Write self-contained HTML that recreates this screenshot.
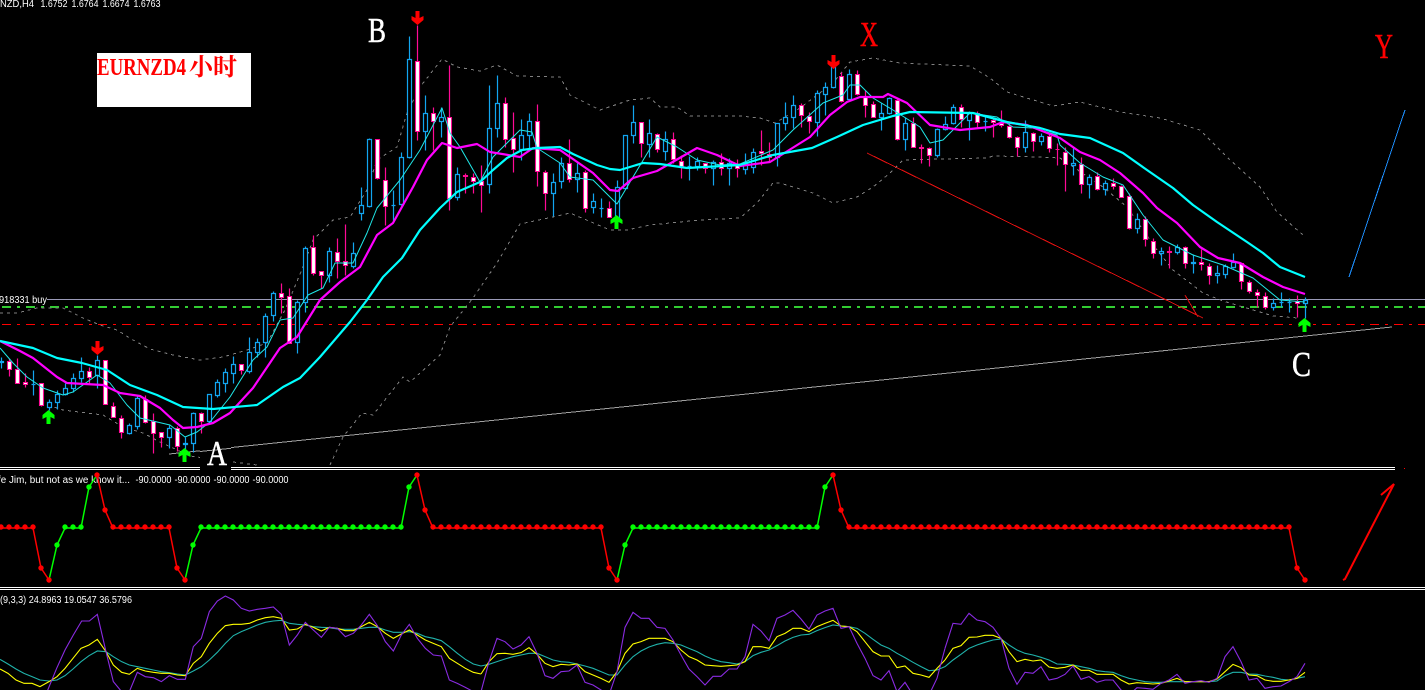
<!DOCTYPE html>
<html lang="zh">
<head>
<meta charset="utf-8">
<title>EURNZD H4</title>
<style>
html,body{margin:0;padding:0;background:#000;width:1425px;height:690px;overflow:hidden}
svg{display:block}
.t{font-family:"Liberation Sans",sans-serif;font-size:10px;fill:#fff}
.l{font-family:"Liberation Serif",serif;font-size:35px;stroke-width:.5}
</style>
</head>
<body>
<svg width="1425" height="690" viewBox="0 0 1425 690" xmlns="http://www.w3.org/2000/svg">
<rect width="1425" height="690" fill="#000"/>

<!-- Horizontal levels -->
<g shape-rendering="crispEdges" fill="none">
<path d="M47 299.5H1425" stroke="#9a9ab8" stroke-width="1"/>
<path d="M2 307H1425" stroke="#32cd32" stroke-width="2" stroke-dasharray="9 6 3 6"/>
<path d="M2 324.5H1425" stroke="#f00" stroke-width="1" stroke-dasharray="9 6 3 6"/>
</g>

<!-- Bollinger bands -->
<g fill="none" stroke="#808080" stroke-width="1" stroke-dasharray="3 4" shape-rendering="crispEdges">
<polyline points="0,313 17,313 37,308 63,308 83,318 100,325 117,330 133,340 150,349 173,355 200,360 223,357 247,350 267,343 285,310 303,267 313,240 333,220 350,217 367,190 377,160 397,147 407,113 420,87 442,59 457,67 480,71 497,65 517,76 560,77 570,95 600,110 630,100 650,98 660,107 677,107 690,116 740,116 760,118 775,123 800,108 833,83 850,62 873,58 900,63 970,66 990,78 1007,92 1040,102 1053,106 1080,102 1120,112 1160,118 1200,130 1227,157 1260,187 1277,212 1303,235"/>
<polyline points="48,405 63,410 87,413 103,415 123,427 143,433 160,442 173,448 190,456 233,462 257,465"/>
<polyline points="330,465 343,437 362,413 373,415 403,377 410,382 440,355 450,327 473,298 497,263 520,224 553,217 570,213 610,230 627,230 650,225 700,220 740,218 757,203 773,183 780,183 813,193 833,203 857,197 873,187 890,173 903,160 987,158 993,156 1040,157 1060,158 1103,187 1127,207 1157,250 1173,270 1203,293 1223,301 1260,312 1273,316 1298,318"/>
</g>

<!-- Trend lines -->
<g fill="none" stroke-width="1" shape-rendering="crispEdges">
<path d="M169 454L1392 327" stroke="#a0a0a0"/>
<path d="M867 153L1203 318M1185 295L1198 317" stroke="#e01010"/>
<path d="M1349 277L1405 110" stroke="#1e90ff"/>
</g>

<!-- Candles -->
<g transform="translate(.5 .5)">
<path fill="none" stroke="#12a5f0" stroke-width="1.2" d="M1 357V368M33 370V395M49 399V410M57 390V409M65 383V395M73 373V392M81 357V382M97 355V388M129 423V434M137 395V429M169 425V448M185 437V450M193 412V452M209 394V423M217 379V397M225 368V392M233 356V383M249 337V373M257 338V357M265 313V357M273 291V321M297 300V353M305 246V312M329 247V282M353 242V268M361 187V220M369 138V207M393 190V222M401 152V205M409 36V158M425 95V150M441 107V137M457 167V200M489 85V193M497 75V137M521 119V160M529 113V149M553 173V216M561 157V188M577 163V192M593 193V213M601 198V217M617 180V218M625 135V188M633 105V143M649 119V157M665 131V160M689 156V180M697 157V170M713 160V185M729 158V185M745 153V174M753 148V173M777 123V166M785 102V130M793 95V128M817 90V136M825 82V115M833 65V88M849 69V100M881 103V130M889 97V114M905 117V150M937 128V157M945 116V130M953 104V124M969 111V140M985 115V131M1025 120V152M1041 133V145M1073 148V175M1089 174V198M1105 180V195M1137 213V233M1161 247V265M1177 244V254M1193 254V273M1217 265V283M1225 264V278M1233 253V268M1273 298V310M1281 292V307M1289 298V312M1305 297V318"/>
<path fill="none" stroke="#ff0a96" stroke-width="1.2" d="M9 358V376M17 358V383M25 373V387M41 383V406M89 367V383M105 360V404M113 402V417M121 415V438M145 395V423M153 413V453M161 432V447M177 426V451M201 412V433M241 364V374M281 283V313M289 288V343M313 235V275M321 271V288M337 238V278M345 224V275M377 139V179M385 167V225M417 25V140M433 107V150M449 65V210M465 173V193M473 173V193M481 165V212M505 97V147M513 112V172M537 104V186M545 170V210M569 139V182M585 170V212M609 201V217M641 122V157M657 133V152M673 132V163M681 155V178M705 163V173M721 153V175M737 159V177M761 130V165M769 142V162M801 103V127M809 112V133M841 72V102M857 70V95M865 90V117M873 101V117M897 97V140M913 117V147M921 144V163M929 147V166M961 104V127M977 111V127M993 118V137M1001 110V127M1009 122V138M1017 136V156M1033 132V151M1049 133V152M1057 143V165M1065 147V191M1081 157V193M1097 172V190M1113 178V189M1121 185V197M1129 193V229M1145 216V246M1153 238V258M1169 246V268M1185 246V268M1201 249V270M1209 263V284M1241 262V289M1249 280V293M1257 289V307M1265 292V309M1297 295V317"/>
<path fill="#000" stroke="#12a5f0" stroke-width="1.2" d="M-1 361h4v1h-4zM31 384h4v0h-4zM47 402h4v5h-4zM55 394h4v8h-4zM63 388h4v6h-4zM71 378h4v10h-4zM79 371h4v7h-4zM95 360h4v15h-4zM127 425h4v8h-4zM135 398h4v28h-4zM167 428h4v9h-4zM183 443h4v1h-4zM191 413h4v30h-4zM207 394h4v27h-4zM215 382h4v13h-4zM223 372h4v11h-4zM231 364h4v9h-4zM247 352h4v19h-4zM255 342h4v10h-4zM263 316h4v26h-4zM271 293h4v22h-4zM295 302h4v40h-4zM303 248h4v54h-4zM327 251h4v24h-4zM351 253h4v13h-4zM359 205h4v8h-4zM367 139h4v67h-4zM391 205h4v0h-4zM399 157h4v47h-4zM407 59h4v98h-4zM423 113h4v18h-4zM439 117h4v4h-4zM455 174h4v23h-4zM487 128h4v56h-4zM495 103h4v25h-4zM519 135h4v14h-4zM527 121h4v14h-4zM551 182h4v11h-4zM559 163h4v18h-4zM575 173h4v6h-4zM591 201h4v6h-4zM599 208h4v0h-4zM615 187h4v30h-4zM623 135h4v53h-4zM631 122h4v13h-4zM647 133h4v11h-4zM663 139h4v12h-4zM687 166h4v0h-4zM695 161h4v5h-4zM711 162h4v6h-4zM727 163h4v5h-4zM743 163h4v6h-4zM751 152h4v15h-4zM775 123h4v34h-4zM783 117h4v6h-4zM791 105h4v12h-4zM815 93h4v29h-4zM823 87h4v7h-4zM831 67h4v20h-4zM847 74h4v25h-4zM879 113h4v4h-4zM887 98h4v15h-4zM903 123h4v16h-4zM935 129h4v26h-4zM943 124h4v5h-4zM951 107h4v16h-4zM967 113h4v7h-4zM983 121h4v0h-4zM1023 132h4v15h-4zM1039 136h4v5h-4zM1071 163h4v2h-4zM1087 177h4v7h-4zM1103 183h4v6h-4zM1135 219h4v9h-4zM1159 251h4v2h-4zM1175 247h4v5h-4zM1191 262h4v1h-4zM1215 273h4v2h-4zM1223 266h4v8h-4zM1231 262h4v5h-4zM1271 303h4v4h-4zM1279 302h4v0h-4zM1287 302h4v0h-4zM1303 300h4v3h-4z"/>
<path fill="#fff" stroke="#ff0a96" stroke-width="1.1" d="M7 361h4v8h-4zM15 369h4v14h-4zM23 382h4v2h-4zM39 383h4v22h-4zM87 371h4v6h-4zM103 360h4v44h-4zM111 406h4v11h-4zM119 418h4v14h-4zM143 399h4v23h-4zM151 421h4v12h-4zM159 432h4v5h-4zM175 428h4v18h-4zM199 413h4v8h-4zM239 364h4v6h-4zM279 293h4v4h-4zM287 296h4v47h-4zM311 247h4v26h-4zM319 271h4v4h-4zM335 252h4v9h-4zM343 261h4v4h-4zM375 139h4v39h-4zM383 180h4v26h-4zM415 61h4v70h-4zM431 113h4v8h-4zM447 117h4v81h-4zM463 175h4v1h-4zM471 177h4v4h-4zM479 181h4v4h-4zM503 103h4v36h-4zM511 138h4v11h-4zM535 121h4v50h-4zM543 172h4v21h-4zM567 163h4v16h-4zM583 172h4v36h-4zM607 208h4v9h-4zM639 122h4v21h-4zM655 134h4v15h-4zM671 139h4v20h-4zM679 161h4v5h-4zM703 163h4v5h-4zM719 162h4v6h-4zM735 164h4v4h-4zM759 151h4v2h-4zM767 154h4v3h-4zM799 105h4v10h-4zM807 116h4v5h-4zM839 76h4v25h-4zM855 74h4v20h-4zM863 97h4v8h-4zM871 104h4v13h-4zM895 100h4v39h-4zM911 123h4v24h-4zM919 147h4v1h-4zM927 148h4v7h-4zM959 107h4v12h-4zM975 113h4v9h-4zM991 120h4v2h-4zM999 123h4v2h-4zM1007 126h4v11h-4zM1015 137h4v10h-4zM1031 133h4v8h-4zM1047 136h4v12h-4zM1055 149h4v0h-4zM1063 152h4v12h-4zM1079 164h4v20h-4zM1095 176h4v13h-4zM1111 183h4v3h-4zM1119 186h4v11h-4zM1127 196h4v32h-4zM1143 219h4v20h-4zM1151 241h4v12h-4zM1167 251h4v1h-4zM1183 247h4v16h-4zM1199 262h4v2h-4zM1207 266h4v9h-4zM1239 263h4v18h-4zM1247 282h4v9h-4zM1255 292h4v3h-4zM1263 296h4v11h-4zM1295 301h4v2h-4z"/>
</g>

<!-- Moving averages -->
<g fill="none" stroke-linejoin="round">
<polyline stroke="#20e8e8" stroke-width="1" points="0,348 13,363 27,377 43,388 63,395 73,392 97,375 110,383 127,405 140,418 170,425 185,437 197,432 210,422 230,397 253,360 267,347 280,320 293,318 308,295 323,288 335,263 343,263 353,263 367,233 377,208 400,180 420,150 442,108 450,133 460,147 480,182 493,157 520,130 532,132 537,148 560,163 570,177 593,180 617,204 633,177 657,137 677,147 697,160 720,165 740,164 773,150 793,130 823,103 843,95 850,85 860,85 873,98 893,110 920,127 930,143 943,140 970,113 997,117 1013,127 1033,128 1057,135 1060,145 1080,163 1103,177 1123,185 1143,215 1163,240 1193,255 1223,265 1253,278 1280,300 1305,302"/>
<polyline stroke="#ff00ff" stroke-width="2.2" points="0,341 20,351 33,358 57,377 67,383 103,385 120,393 140,396 160,408 173,420 183,428 197,427 213,423 230,413 253,388 280,348 297,337 320,300 340,282 360,267 377,235 393,223 413,187 427,160 442,143 457,148 477,144 490,152 520,157 533,148 560,150 593,173 610,190 618,191 633,178 657,171 697,148 717,155 740,166 770,162 810,137 830,115 847,102 860,97 883,97 888,94 907,103 930,125 960,130 990,127 1003,122 1027,125 1060,138 1080,152 1100,160 1120,173 1143,193 1157,208 1177,223 1200,247 1218,258 1240,263 1263,277 1283,287 1305,294"/>
<polyline stroke="#00ffff" stroke-width="2.2" points="0,341 33,348 57,358 82,363 107,370 130,385 157,395 183,407 213,409 257,405 283,387 300,378 320,357 350,322 367,300 383,277 402,258 420,230 440,208 457,192 480,182 493,170 507,158 522,150 537,148 560,147 573,154 597,165 610,169 620,170 643,163 660,164 687,168 740,165 773,155 812,148 837,137 863,125 893,116 910,112 973,113 1007,122 1040,128 1060,134 1090,138 1123,153 1147,170 1173,188 1193,205 1217,222 1247,242 1263,253 1280,267 1305,277"/>
</g>

<!-- Arrows -->
<g fill="#f00">
<polygon transform="translate(97.5 341)" points="-2,0 2,0 2,7 6,5 6,9 0,14 -6,9 -6,5 -2,7"/>
<polygon transform="translate(417.5 11)" points="-2,0 2,0 2,7 6,5 6,9 0,14 -6,9 -6,5 -2,7"/>
<polygon transform="translate(833.5 55)" points="-2,0 2,0 2,7 6,5 6,9 0,14 -6,9 -6,5 -2,7"/>
</g>
<g fill="#00ff00">
<polygon transform="translate(48.5 410)" points="0,0 6,5 6,9 2,7 2,14 -2,14 -2,7 -6,9 -6,5"/>
<polygon transform="translate(184.5 448)" points="0,0 6,5 6,9 2,7 2,14 -2,14 -2,7 -6,9 -6,5"/>
<polygon transform="translate(616.5 215)" points="0,0 6,5 6,9 2,7 2,14 -2,14 -2,7 -6,9 -6,5"/>
<polygon transform="translate(1304.5 318)" points="0,0 6,5 6,9 2,7 2,14 -2,14 -2,7 -6,9 -6,5"/>
</g>

<!-- Text label box -->
<rect x="97" y="53" width="154" height="54" fill="#fff"/>
<text x="97" y="75" textLength="89" lengthAdjust="spacingAndGlyphs" style="font-family:'Liberation Serif',serif;font-size:24px;font-weight:bold;fill:#f00">EURNZD4</text>
<text x="189" y="75" style="font-family:'Liberation Serif','Noto Serif CJK SC',serif;font-size:24px;font-weight:bold;fill:#f00">小时</text>

<!-- Separators -->
<g shape-rendering="crispEdges" fill="#fff">
<rect x="0" y="467" width="1395" height="1"/>
<rect x="0" y="469" width="1395" height="1"/>
<rect x="0" y="587" width="1425" height="1"/>
<rect x="0" y="589" width="1425" height="1"/>
</g>
<rect x="200" y="440" width="31" height="31" fill="#000"/>
<path d="M200 451.5L231 448.3" stroke="#a0a0a0" fill="none" stroke-width="1" shape-rendering="crispEdges"/>

<!-- Chart letters -->
<text class="l" x="368" y="42" textLength="18" lengthAdjust="spacingAndGlyphs" fill="#fff" stroke="#fff">B</text>
<text class="l" x="860" y="46" textLength="18" lengthAdjust="spacingAndGlyphs" fill="#f00" stroke="#f00">X</text>
<text class="l" x="1375" y="58" textLength="18" lengthAdjust="spacingAndGlyphs" fill="#f00" stroke="#f00">Y</text>
<text class="l" x="1292" y="376" textLength="19" lengthAdjust="spacingAndGlyphs" fill="#fff" stroke="#fff">C</text>
<text class="l" x="207" y="465" textLength="20" lengthAdjust="spacingAndGlyphs" fill="#fff" stroke="#fff">A</text>

<!-- Header texts -->
<text class="t" x="0" y="7" textLength="34" lengthAdjust="spacingAndGlyphs">NZD,H4</text>
<text class="t" x="40.5" y="7" textLength="27" lengthAdjust="spacingAndGlyphs">1.6752</text>
<text class="t" x="71.5" y="7" textLength="27" lengthAdjust="spacingAndGlyphs">1.6764</text>
<text class="t" x="102.5" y="7" textLength="27" lengthAdjust="spacingAndGlyphs">1.6674</text>
<text class="t" x="133.5" y="7" textLength="27" lengthAdjust="spacingAndGlyphs">1.6763</text>
<text class="t" x="-1" y="303" textLength="48" lengthAdjust="spacingAndGlyphs">918331 buy</text>
<text class="t" x="-2" y="483" textLength="132" lengthAdjust="spacingAndGlyphs">fe Jim, but not as we know it...</text>
<text class="t" x="135.5" y="483" textLength="36" lengthAdjust="spacingAndGlyphs">-90.0000</text>
<text class="t" x="174.5" y="483" textLength="36" lengthAdjust="spacingAndGlyphs">-90.0000</text>
<text class="t" x="213.5" y="483" textLength="36" lengthAdjust="spacingAndGlyphs">-90.0000</text>
<text class="t" x="252.5" y="483" textLength="36" lengthAdjust="spacingAndGlyphs">-90.0000</text>
<text class="t" x="0" y="603" textLength="132" lengthAdjust="spacingAndGlyphs">(9,3,3) 24.8963 19.0547 36.5796</text>

<!-- Middle indicator -->
<g fill="none" stroke-width="1.5">
<g stroke="#f00">
<polyline points="0,528 33,528 41,568 49,580"/>
<polyline points="97,475 105,510 113,528 169,528 177,568 185,580"/>
<polyline points="417,475 425,510 433,528 601,528 609,568 617,580"/>
<polyline points="833,475 841,510 849,528 1289,528 1297,568 1305,580"/>
</g>
<g stroke="#00ff00">
<polyline points="49,580 57,545 65,528 81,528 89,487 97,475"/>
<polyline points="185,580 193,545 201,528 401,528 409,487 417,475"/>
<polyline points="617,580 625,545 633,528 817,528 825,487 833,475"/>
</g>
</g>
<g fill="none" stroke-linecap="round" stroke-width="5.4" stroke-dasharray="0 8">
<path stroke="#f00" d="M1 527H34M113 527H170M433 527H602M849 527H1290"/>
<path stroke="#00ff00" d="M65 527H82M201 527H402M633 527H818"/>
</g>
<g fill="#f00">
<circle cx="41" cy="568" r="2.7"/><circle cx="49" cy="580" r="2.7"/><circle cx="97" cy="475" r="2.7"/><circle cx="105" cy="510" r="2.7"/>
<circle cx="177" cy="568" r="2.7"/><circle cx="185" cy="580" r="2.7"/><circle cx="417" cy="475" r="2.7"/><circle cx="425" cy="510" r="2.7"/>
<circle cx="609" cy="568" r="2.7"/><circle cx="617" cy="580" r="2.7"/><circle cx="833" cy="475" r="2.7"/><circle cx="841" cy="510" r="2.7"/>
<circle cx="1297" cy="568" r="2.7"/><circle cx="1305" cy="580" r="2.7"/>
</g>
<g fill="#00ff00">
<circle cx="57" cy="545" r="2.7"/><circle cx="89" cy="487" r="2.7"/><circle cx="193" cy="545" r="2.7"/><circle cx="409" cy="487" r="2.7"/>
<circle cx="625" cy="545" r="2.7"/><circle cx="825" cy="487" r="2.7"/>
</g>
<polyline fill="none" stroke="#f00" stroke-width="2" points="1343,580 1345,579 1394,484 1381,495"/>
<rect x="1404" y="468" width="1" height="1" fill="#f00"/>

<!-- Stochastic -->
<g fill="none" stroke-width="3.3">
<g transform="translate(0 465) scale(.33333)">
<polyline stroke="#20b2aa" points="0,583 24,597 48,612 72,625 96,635 120,645 147,648 171,645 195,632 219,612 243,590 267,572 292,558 318,560 340,575 365,590 388,600 412,605 436,610 460,615 484,620 508,623 532,627 556,630 580,618 604,605 628,585 652,562 676,535 700,512 724,500 748,490 772,480 796,472 820,468 844,466 868,475 892,478 916,480 940,485 964,487 988,488 1012,492 1036,493 1060,493 1084,490 1108,487 1132,487 1156,495 1180,502 1204,502 1228,500 1252,505 1276,515 1300,520 1324,527 1348,545 1372,565 1396,583 1420,597 1443,603"/>
<polyline stroke="#ffff00" points="0,612 24,625 48,645 72,655 96,655 120,665 147,650 171,635 195,610 219,580 243,550 267,540 292,523 318,560 340,600 365,622 388,628 412,610 436,618 460,622 484,625 508,625 532,630 556,632 580,595 604,575 628,535 652,505 676,482 700,478 724,478 748,475 772,465 796,458 820,455 844,460 868,495 892,492 916,478 940,487 964,498 988,487 1012,490 1036,497 1060,497 1084,485 1108,472 1132,485 1156,505 1180,520 1204,507 1228,495 1252,510 1276,525 1300,535 1324,545 1348,580 1372,595 1396,610 1420,622 1443,627"/>
<polyline stroke="#8a2be2" points="142,678 170,610 195,555 220,510 245,468 268,468 292,448 318,560 340,650 365,680 388,680 412,622 436,635 460,638 484,650 508,632 532,643 556,643 580,545 604,520 628,440 652,408 676,393 700,405 724,430 748,438 772,433 796,430 820,426 844,448 868,540 892,510 916,472 940,495 964,517 988,487 1012,490 1036,515 1060,505 1084,480 1108,448 1132,482 1156,530 1180,558 1204,510 1228,478 1252,520 1276,550 1300,570 1324,573 1348,645 1372,655 1396,667 1420,680 1443,680"/>
</g>
<g transform="translate(480 465) scale(.33333)">
<polyline stroke="#20b2aa" points="3,603 27,598 51,590 75,582 99,575 123,570 147,565 171,565 195,575 219,585 243,590 267,592 291,597 315,603 339,610 363,620 387,630 411,630 435,600 459,575 483,558 507,546 531,538 555,533 579,535 603,540 627,550 651,560 675,573 699,583 723,590 747,593 771,597 795,590 819,572 843,562 867,555 891,542 915,528 939,517 963,510 987,508 1011,497 1035,488 1059,480 1083,483 1107,485 1131,490 1155,505 1179,523 1203,540 1227,550 1251,565 1275,578 1299,592 1323,605 1347,617 1371,615 1395,605"/>
<polyline stroke="#ffff00" points="3,627 27,590 51,566 75,565 99,568 123,563 147,548 171,568 195,595 219,605 243,598 267,600 291,597 315,620 339,630 363,640 387,652 411,620 435,565 459,537 483,530 507,520 531,520 555,520 579,530 603,555 627,575 651,585 675,600 699,602 723,604 747,602 771,600 795,590 819,545 843,545 867,550 891,515 915,505 939,490 963,490 987,500 1011,485 1035,475 1059,466 1083,483 1107,485 1131,500 1155,530 1179,560 1203,573 1227,573 1251,608 1275,603 1299,625 1323,630 1347,637 1371,610 1395,585"/>
<polyline stroke="#8a2be2" points="3,680 27,590 51,520 75,530 99,552 123,540 147,515 171,565 195,632 219,640 243,620 267,618 291,600 315,652 339,660 363,675 387,690 411,620 435,487 459,442 483,460 507,460 531,487 555,490 579,525 603,570 627,612 651,635 675,660 699,634 723,634 747,612 771,612 795,575 819,478 843,498 867,527 891,460 915,450 939,436 963,462 987,492 1011,450 1035,438 1059,430 1083,490 1107,485 1131,535 1155,580 1179,632 1203,645 1227,617 1251,680 1275,652 1299,690 1323,720 1347,690 1371,640 1395,550"/>
</g>
<g transform="translate(945 465) scale(.33333)">
<polyline stroke="#20b2aa" points="0,605 24,585 48,568 72,550 96,540 120,532 144,525 168,522 192,540 216,555 240,565 264,570 288,577 312,585 336,597 360,598 384,600 408,605 432,610 456,617 480,620 504,622 528,632 552,640 576,645 600,650 624,652 648,652 672,650 696,650 720,650 744,650 768,650 792,650 816,648 840,632 864,622 888,622 912,627 936,628 960,633 984,637 1008,643 1032,645 1056,640 1080,635"/>
<polyline stroke="#ffff00" points="0,585 24,550 48,542 72,517 96,516 120,511 144,511 168,520 192,560 216,590 240,583 264,588 288,585 312,606 336,610 360,607 384,600 408,616 432,616 456,628 480,628 504,628 528,645 552,657 576,653 600,655 624,657 648,655 672,648 696,640 720,650 744,650 768,650 792,650 816,642 840,620 864,598 888,608 912,630 936,632 960,645 984,649 1008,649 1032,645 1056,640 1080,622"/>
<polyline stroke="#8a2be2" points="0,550 24,475 48,478 72,445 96,465 120,470 144,487 168,520 192,610 216,658 240,622 264,625 288,605 312,645 336,640 360,628 384,603 408,643 432,635 456,652 480,645 504,645 528,675 552,690 576,668 600,670 624,673 648,655 672,645 696,628 720,655 744,650 768,647 792,652 816,640 840,575 864,545 888,590 912,645 936,640 960,670 984,665 1008,663 1032,650 1056,635 1080,595"/>
</g>
</g>
</svg>
</body>
</html>
